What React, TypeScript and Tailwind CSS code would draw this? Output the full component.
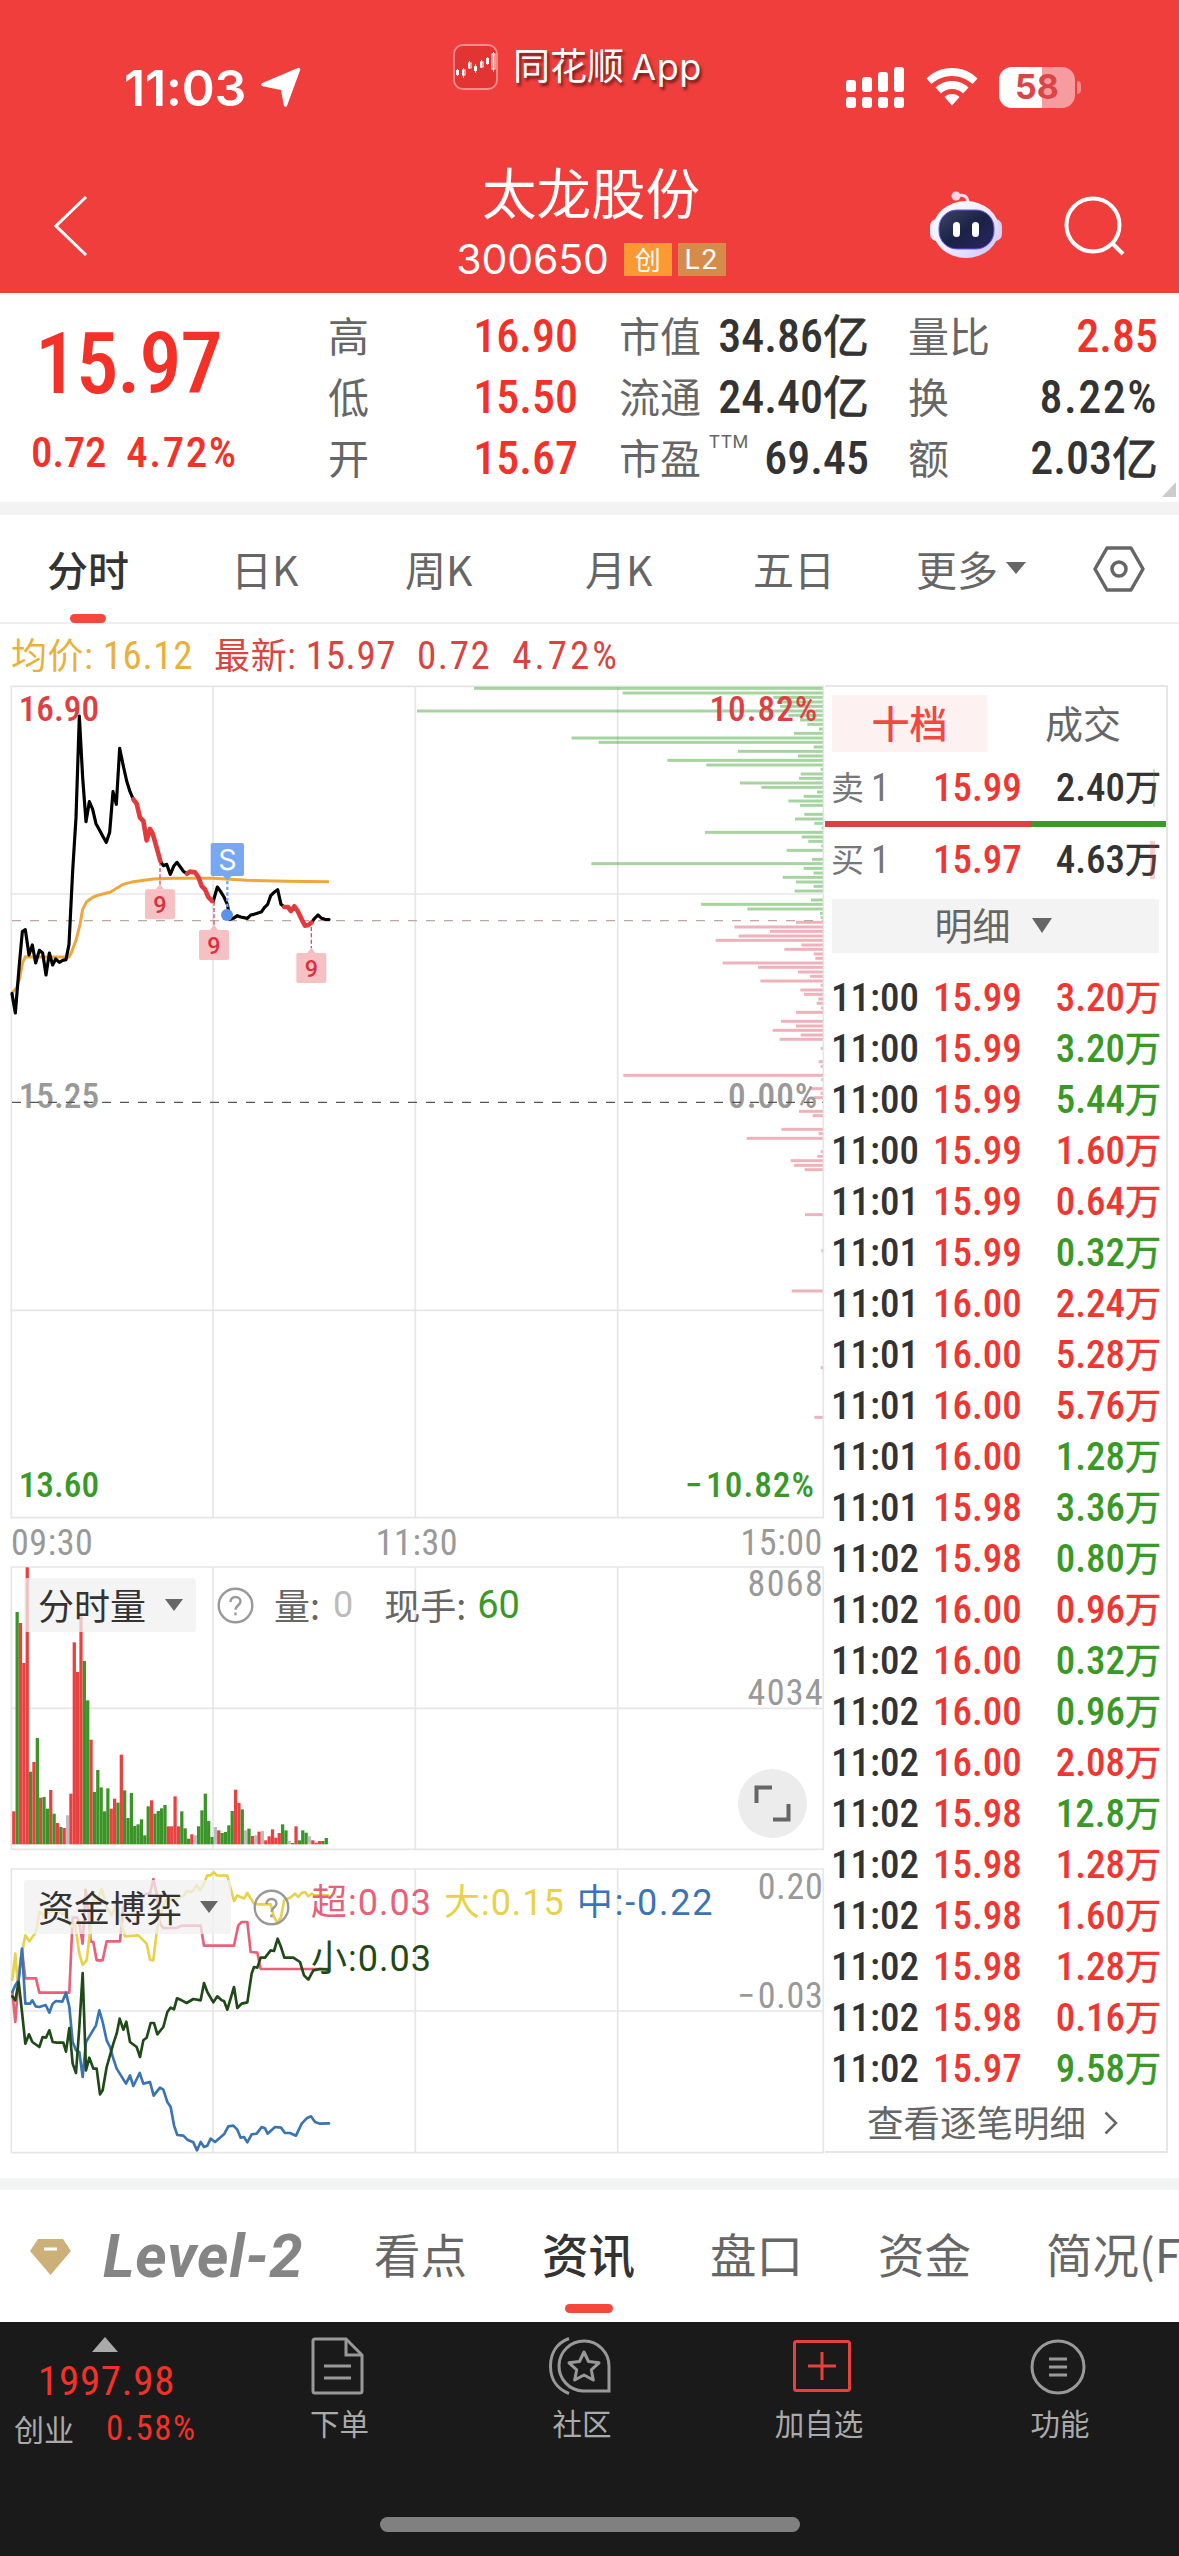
import React from 'react';
import clsx from 'clsx';

type Tone = 'red' | 'green';

const quoteColumns = [
  [
    { label: '高', value: '16.90', unit: '', hot: true },
    { label: '低', value: '15.50', unit: '', hot: true },
    { label: '开', value: '15.67', unit: '', hot: true },
  ],
  [
    { label: '市值', value: '34.86', unit: '亿', hot: false },
    { label: '流通', value: '24.40', unit: '亿', hot: false },
    { label: '市盈', value: '69.45', unit: '', hot: false, sup: 'TTM' },
  ],
  [
    { label: '量比', value: '2.85', unit: '', hot: true },
    { label: '换', value: '8.22%', unit: '', hot: false },
    { label: '额', value: '2.03', unit: '亿', hot: false },
  ],
];

const trades: [string, string, string, Tone][] = [
  ['11:00', '15.99', '3.20', 'red'],
  ['11:00', '15.99', '3.20', 'green'],
  ['11:00', '15.99', '5.44', 'green'],
  ['11:00', '15.99', '1.60', 'red'],
  ['11:01', '15.99', '0.64', 'red'],
  ['11:01', '15.99', '0.32', 'green'],
  ['11:01', '16.00', '2.24', 'red'],
  ['11:01', '16.00', '5.28', 'red'],
  ['11:01', '16.00', '5.76', 'red'],
  ['11:01', '16.00', '1.28', 'green'],
  ['11:01', '15.98', '3.36', 'green'],
  ['11:02', '15.98', '0.80', 'green'],
  ['11:02', '16.00', '0.96', 'red'],
  ['11:02', '16.00', '0.32', 'green'],
  ['11:02', '16.00', '0.96', 'green'],
  ['11:02', '16.00', '2.08', 'red'],
  ['11:02', '15.98', '12.8', 'green'],
  ['11:02', '15.98', '1.28', 'red'],
  ['11:02', '15.98', '1.60', 'red'],
  ['11:02', '15.98', '1.28', 'red'],
  ['11:02', '15.98', '0.16', 'red'],
  ['11:02', '15.97', '9.58', 'green'],
];

// Chart drawings use a grid of three units per pixel.
const GRID_X = [34, 639, 1246, 1853, 2470];

const blackSegments = [
  '36,968 46,1026 58,880 67,782 76,776 87,852 97,822 107,876 118,838 128,846 138,912 148,846 158,882 167,864 178,874 188,868 198,866 207,820 211,740 218,600 228,440 238,135 248,320 258,452 268,392 278,415 288,458 298,476 308,495 319,514 329,484 339,362 349,400 359,232 370,285 380,330 390,362 400,385',
  '481,570 490,584 500,580 511,610 521,586 531,574 541,588 551,602 561,608',
  '640,690 652,648 662,662 672,678 682,700 690,745 700,742 712,734 722,738 742,742 752,732 762,730 785,722 793,710 803,700 812,674 822,664 833,656 843,700 853,708',
  '934,755 944,742 954,732 965,742 975,745 987,746',
];

const redSegments = [
  '400,385 410,398 420,440 430,450 440,508 450,474 458,488 470,530 481,570',
  '561,608 570,602 585,604 595,618 605,645 615,655 625,678 636,690',
  '853,708 864,708 873,720 883,706 893,720 905,745 915,764 925,762 934,755',
];

const averageLine =
  '36,966 50,950 58,925 68,875 76,857 90,858 150,858 207,858 214,845 228,808 240,760 248,715 260,692 280,678 300,671 330,664 350,652 370,640 400,632 460,624 520,622 640,622 740,628 860,631 987,632';

// [y, left edge]
const sellDepth = [
  [52, 222], [66, 668], [79, 1120], [93, 1130], [106, 1140], [120, 51], [133, 1165], [147, 1200], [160, 1222], [174, 1257],
  [187, 1182], [201, 515], [214, 596], [228, 1241], [241, 1014], [255, 1194], [268, 802], [282, 919], [295, 1262], [309, 1202],
  [322, 1197], [336, 1020], [349, 1084], [363, 1251], [376, 1211], [390, 1165], [403, 1200], [430, 1213], [444, 1185], [457, 1243],
  [471, 1265], [484, 915], [498, 1205], [511, 1225], [525, 1264], [538, 1160], [565, 1236], [578, 574], [592, 1211], [606, 1241],
  [619, 1148], [633, 1188], [646, 1241], [660, 1184], [687, 1233], [700, 903], [714, 1042], [727, 1260], [740, 1262],
];

const buyDepth = [
  [754, 1188], [768, 1003], [781, 1110], [795, 1016], [808, 947], [822, 1204], [835, 1153], [849, 1241], [862, 1246], [876, 968],
  [889, 1074], [903, 1194], [916, 1230], [930, 1081], [943, 1262], [957, 1201], [970, 1212], [984, 1255], [997, 1250], [1011, 1263],
  [1024, 1188], [1051, 1143], [1065, 1188], [1078, 1118], [1092, 1202], [1105, 1139], [1132, 1262], [1172, 1256], [1186, 1262],
  [1213, 670], [1226, 1264], [1253, 1232], [1267, 1262], [1280, 1240], [1321, 1197], [1334, 1238], [1375, 1144], [1388, 1256],
  [1402, 1040], [1442, 1262], [1456, 1252], [1469, 1172], [1483, 1182], [1496, 1214], [1631, 1215], [1739, 1264], [1860, 1175],
  [2090, 1262], [2239, 1243],
];

// One bar per minute: r = up, g = down, k = flat
const volumeBars =
  'r1053,g455,r488,r608,r321,g934,r905,g833,r1012,g1010,g1045,r989,g1060,r1088,g1100,r1103,k1065,r1000,r546,r635,r468,g602,g720,r838,g995,g929,g981,g1053,g984,r1045,r1015,g1027,r883,g990,g1073,g998,g1097,g1092,g1077,g1125,g1038,r1020,g1060,g1052,g1044,g1034,r1098,r1098,r1008,r1098,g1053,g1104,g1135,r1122,k1125,g1098,g1050,g1000,g1082,g1130,k1100,r1110,g1118,g1115,g1095,g1052,r988,r1028,g1047,k1110,g1105,r1127,k1125,r1114,k1112,r1140,r1128,r1107,r1132,r1118,g1092,g1110,k1142,g1148,r1098,g1140,g1110,g1117,k1128,r1140,r1147,r1142,g1142,g1133'.split(',');

const volumeFill: Record<string, string> = { r: '#e8413f', g: '#3a9427', k: '#bdbdbd' };

const fundLines = [
  {
    color: '#e9607a',
    points:
      '37,395 46,485 56,355 66,270 76,354 108,354 118,397 208,397 218,172 232,172 238,190 248,250 257,88 267,170 272,243 280,245 290,300 308,300 320,243 360,243 370,140 380,130 440,100 450,100 460,56 470,100 480,190 490,203 530,203 545,196 602,196 612,256 702,256 715,195 725,185 742,185 752,275 772,277 782,326 985,326',
  },
  {
    color: '#e8d24a',
    points:
      '37,358 46,280 52,360 60,310 76,225 88,243 108,215 118,155 130,165 140,160 160,150 200,165 215,200 225,190 238,280 248,314 260,300 270,215 280,110 290,130 305,85 320,140 335,165 350,130 365,195 375,228 415,225 430,240 440,250 450,298 460,300 470,215 480,170 495,120 530,115 550,108 560,92 572,95 580,90 590,74 600,90 612,70 622,45 632,45 642,36 650,45 682,46 692,85 702,122 712,105 722,110 732,115 742,98 762,130 780,132 812,132 822,170 833,188 843,170 853,118 870,112 885,100 895,110 905,98 915,95 925,108 935,100 945,105 985,105',
  },
  {
    color: '#3a74b5',
    points:
      '37,395 46,375 56,360 66,265 76,430 90,430 97,420 107,438 118,440 137,434 148,457 158,430 168,422 187,424 198,397 208,440 218,545 228,570 238,575 248,650 258,545 270,525 288,495 298,450 308,485 320,540 330,560 340,595 350,625 378,670 390,645 400,677 419,638 430,670 450,665 461,706 480,682 490,688 502,725 512,740 522,795 532,824 550,826 562,838 580,846 591,870 602,845 612,860 622,856 632,835 645,845 672,822 685,798 700,796 712,808 722,832 732,830 742,846 755,822 770,820 785,800 795,804 803,820 825,800 843,802 855,818 870,818 888,826 905,790 920,774 933,768 945,785 960,790 987,789',
  },
  {
    color: '#1f4a17',
    points:
      '37,408 46,420 56,365 66,455 76,550 87,522 97,545 118,560 128,530 138,532 148,510 158,545 170,547 190,547 198,574 208,503 218,610 228,638 238,500 248,338 258,630 268,592 280,625 290,625 300,702 308,690 320,620 340,550 350,520 359,475 370,508 379,484 390,545 410,560 420,590 430,540 440,532 452,488 462,488 472,522 490,500 502,455 512,442 522,447 531,414 545,420 560,428 580,416 602,420 612,368 622,395 640,426 652,408 665,420 672,422 682,448 702,380 712,443 725,430 742,426 755,340 762,320 772,322 782,292 795,292 812,270 822,272 833,235 843,260 853,292 880,292 900,305 912,345 925,358 940,330 960,326 987,328',
  },
];

const StatusBar: React.FC = () => (
  <div className="flex h-[130px] items-start text-white">
    <div className="flex w-[453px] items-center gap-[12px] pl-[124px] pt-[63px]">
      <span className="w-[124px] font-['Inter',sans-serif] text-[50px] font-semibold leading-[50px] tracking-[-0.2px]">11:03</span>
      <svg className="h-[42px] w-[42px]" viewBox="0 0 42 42">
        <path d="M38.500 2.500 25.500 38 22.500 21.500 3 17.500z" fill="#fff" stroke="#fff" strokeWidth="3.500" strokeLinejoin="round" />
      </svg>
    </div>
    <div className="flex items-center gap-[15px] pt-[44px]">
      <svg className="h-[46px] w-[45px]" viewBox="0 0 45 46">
        <rect x="1" y="1" width="43" height="44" rx="9" fill="#e23533" stroke="#f58f8c" strokeWidth="1.800" />
        <g stroke="#fff" strokeWidth="1" fill="none">
          <path d="M4.500 25v7M10.500 24v10M16.500 17v8M22.500 20v9M28.500 16v8M34.500 13v8M40.500 8v20" />
          <rect x="9.500" y="26" width="2.500" height="5" />
          <rect x="15.500" y="19" width="2.500" height="5" />
          <rect x="27.500" y="18" width="2.500" height="5" />
          <rect x="39" y="10" width="3" height="15" />
        </g>
        <path d="M3 26h3v5H3zM21 22h3v5h-3zM33 14h3v6h-3z" fill="#fff" />
      </svg>
      <span className="-mt-[3px] text-[37px] leading-[46px] [text-shadow:2px_3px_3px_rgba(0,0,0,0.55)]">
        同花顺 <span className="-ml-[1px] font-['Inter',sans-serif] text-[36px] tracking-[0.5px]">App</span>
      </span>
    </div>
    <div className="ml-auto flex items-center gap-[21px] pr-[98px] pt-[66px]">
      <svg className="h-[42px] w-[59px]" viewBox="0 0 59 42" fill="#fff">
        <rect x="0" y="14" width="10" height="12" rx="3" />
        <rect x="16" y="11" width="10" height="15" rx="3" />
        <rect x="32" y="6" width="10" height="20" rx="3" />
        <rect x="48" y="1" width="10" height="25" rx="3" />
        <rect x="0" y="31" width="10" height="11" rx="3" />
        <rect x="16" y="31" width="10" height="11" rx="3" />
        <rect x="32" y="31" width="10" height="11" rx="3" />
        <rect x="48" y="31" width="10" height="11" rx="3" />
      </svg>
      <svg className="h-[38px] w-[52px]" viewBox="0 0 52 38" fill="#fff">
        <path d="M26 0c10 0 19 4 25.500 10.500l-5 5.500C41 11 34 8 26 8S11 11 5.500 16l-5-5.500C7 4 16 0 26 0z" />
        <path d="M26 13c6.500 0 12 2.500 16.500 6.500l-5.500 6C34 22.500 30.500 21 26 21s-8 1.500-11 4.500l-5.500-6C14 15.500 19.500 13 26 13z" />
        <path d="M26 26c3 0 5.500 1 7.500 3L26 37.500 18.500 29c2-2 4.500-3 7.500-3z" />
      </svg>
      <div className="flex items-center gap-[2px]">
        <div className="flex h-[41px] w-[76px] items-center justify-center rounded-[13px] bg-[linear-gradient(90deg,#fff_56%,#f69c9f_56%)]">
          <span className="font-['Inter',sans-serif] text-[34px] font-bold leading-none text-[#dc4446]">58</span>
        </div>
        <div className="h-[13px] w-[4px] rounded-r-full bg-[#f48a8a]" />
      </div>
    </div>
  </div>
);

const Header: React.FC = () => (
  <header className="h-[293px] bg-[#ef3e3c]">
    <StatusBar />
    <div className="flex h-[163px] pl-[54px] text-white">
      <svg className="mt-[66px] h-[60px] w-[34px]" viewBox="0 0 34 60" fill="none" stroke="#fff" strokeWidth="3">
        <path d="M32 1 2 30l30 29" />
      </svg>
      <div className="ml-[334px] flex w-[338px] flex-col items-center pt-[34px]">
        <h1 className="text-[54.500px] leading-[54px]">太龙股份</h1>
        <div className="mt-[21px] flex items-center">
          <span className="font-['Inter',sans-serif] text-[41px] leading-[41px] tracking-[-0.1px]">300650</span>
          <span className="ml-[15px] flex h-[33px] w-[48px] items-center justify-center bg-[#fb9932] pb-[2px] text-[26px] leading-none">创</span>
          <span className="ml-[6px] flex h-[33px] w-[48px] items-center justify-center bg-[#d58c4b] font-['Roboto',sans-serif] text-[28px] leading-none tracking-[2px]">L2</span>
        </div>
      </div>
      <div className="ml-[170px] flex gap-[60px] pt-[60px]">
        <svg className="h-[68px] w-[74px]" viewBox="0 0 74 68">
          <defs>
            <linearGradient id="shell" x1="0" y1="0" x2="1" y2="1">
              <stop offset="0" stopColor="#ffffff" />
              <stop offset="0.600" stopColor="#ebe6ff" />
              <stop offset="1" stopColor="#c9c0fb" />
            </linearGradient>
            <linearGradient id="visor" x1="0" y1="0" x2="1" y2="1">
              <stop offset="0" stopColor="#3d4468" />
              <stop offset="0.500" stopColor="#1a2245" />
              <stop offset="1" stopColor="#2b2566" />
            </linearGradient>
          </defs>
          <path d="M27 6c6-2 11 0 11 7" fill="none" stroke="#f6dcea" strokeWidth="3" />
          <circle cx="26" cy="6" r="4.500" fill="#f9d5e4" />
          <rect x="0" y="29" width="14" height="22" rx="7" fill="#f0ecff" />
          <rect x="58" y="29" width="14" height="22" rx="7" fill="#d8d0fb" />
          <ellipse cx="36" cy="39.500" rx="33" ry="28.500" fill="url(#shell)" />
          <rect x="9" y="20" width="55" height="39" rx="18" fill="url(#visor)" stroke="#6a58e0" strokeWidth="1" />
          <rect x="23" y="32" width="7" height="15" rx="3.500" fill="#fff" />
          <rect x="42" y="32" width="7" height="15" rx="3.500" fill="#fff" />
        </svg>
        <svg className="mt-[5px] h-[62px] w-[62px]" viewBox="0 0 62 62" fill="none" stroke="#fff" strokeWidth="4">
          <circle cx="29" cy="30" r="26.500" />
          <path d="M48 48l11 11" />
        </svg>
      </div>
    </div>
  </header>
);

const QuotePanel: React.FC = () => (
  <section className="flex h-[209px] pt-[12px]">
    <div className="w-[328px] shrink-0 text-[#f33128]">
      <div className="pl-[35px] pt-[17px] font-['Roboto_Condensed',sans-serif] text-[85px] font-medium leading-[85px] tracking-[-1.5px]">15.97</div>
      <div className="flex gap-[20px] pl-[31px] pt-[20px] font-['Roboto_Condensed',sans-serif] text-[43px] font-medium leading-[50px]">
        <span className="tracking-[-0.3px]">0.72</span>
        <span className="tracking-[1.5px]">4.72%</span>
      </div>
    </div>
    <div className="flex shrink-0 gap-[41px]">
      {quoteColumns.map((rows, idx) => (
        <div key={idx} className={clsx('flex w-[250px] flex-col', idx === 2 && '-ml-[2px]')}>
          {rows.map((row) => (
            <div key={row.label} className="flex h-[61px] items-center justify-between">
              <span className="-mt-[3px] flex text-[41px] leading-none text-[#666]">
                {row.label}
                {'sup' in row && <span className="-mt-[3px] ml-[8px] font-['Roboto',sans-serif] text-[18px] tracking-[1px]">{row.sup}</span>}
              </span>
              <span
                className={clsx(
                  "flex items-center font-['Roboto_Condensed',sans-serif] text-[46px] font-medium leading-none",
                  row.hot ? 'text-[#f33128]' : 'text-[#333]',
                  row.value.endsWith('%') && 'tracking-[1.5px]',
                )}
              >
                {row.value}
                {row.unit && <span className="-mt-[6px] font-['Noto_Sans_CJK_SC',sans-serif] text-[46px] font-normal leading-none [-webkit-text-stroke:0.8px]">{row.unit}</span>}
              </span>
            </div>
          ))}
        </div>
      ))}
    </div>
    <div className="mb-[5px] ml-[4px] mt-auto h-0 w-0 border-b-[15px] border-l-[14px] border-b-[#ccc] border-l-transparent" />
  </section>
);

const PeriodTabs: React.FC = () => (
  <nav className="flex h-[109px] items-start border-b-2 border-[#eee] pl-[47px] text-[41px] leading-[106px] text-[#666]">
    <div className="flex w-[184px] flex-col font-medium text-[#333]">
      <span>分时</span>
      <span className="-mt-[7px] ml-[23px] h-[9px] w-[36px] rounded-full bg-[#f5483b]" />
    </div>
    <span className="w-[174px]">日K</span>
    <span className="w-[180px]">周K</span>
    <span className="w-[168px]">月K</span>
    <span className="w-[163px]">五日</span>
    <div className="flex w-[177px] items-center gap-[8px]">
      更多
      <span className="h-0 w-0 border-x-[10px] border-t-[12px] border-x-transparent border-t-[#666]" />
    </div>
    <svg className="mt-[31px] h-[46px] w-[52px]" viewBox="0 0 52 46" fill="none" stroke="#666" strokeWidth="3.500">
      <path d="M14 2h24l12 21-12 21H14L2 23z" strokeLinejoin="round" />
      <circle cx="26" cy="23" r="7" />
    </svg>
  </nav>
);

const NineMark: React.FC<{ x: number; from: number; top: number }> = ({ x, from, top }) => (
  <g>
    <path d={`M${x} ${from}V${top - 14}`} stroke="#d84a5c" strokeWidth="4" strokeDasharray="12 7" />
    <path d={`M${x - 12} ${top}l12-16 12 16z`} fill="#f5bcbd" />
    <rect x={x - 45} y={top} width="90" height="90" rx="6" fill="#f5bcbd" fillOpacity="0.920" />
    <text x={x} y={top + 72} textAnchor="middle" className="fill-[#dc2f3c] font-['Roboto',sans-serif] text-[70px] font-medium">9</text>
  </g>
);

const PriceChart: React.FC = () => (
  <svg className="block h-[835px] w-[825px]" viewBox="0 42 2475 2505" fill="none">
    <g stroke="#e6e6e6" strokeWidth="5">
      {GRID_X.map((x) => (
        <path key={x} d={`M${x} 46V2540`} />
      ))}
      <path d="M32 46H2472M32 669H2472M32 1918H2472M32 2540H2472" />
    </g>
    <g fill="#3aa02c" fillOpacity="0.450">
      {sellDepth.map(([y, x]) => (
        <rect key={y} x={1200 + x} y={y - 4.5} width={1268 - x} height="9" />
      ))}
    </g>
    <g fill="#d9475a" fillOpacity="0.420">
      {buyDepth.map(([y, x]) => (
        <rect key={y} x={1200 + x} y={y - 4.5} width={1268 - x} height="9" />
      ))}
    </g>
    <path d="M36 749H2468" stroke="#bda99f" strokeWidth="4" strokeDasharray="27 27" />
    <g className="font-['Roboto_Condensed',sans-serif] text-[106px] font-medium">
      <text x="56" y="150" className="fill-[#dc4043]">16.90</text>
      <text x="2455" y="150" textAnchor="end" className="fill-[#dc4043] tracking-[3px]">10.82%</text>
      <text x="56" y="1312" className="fill-[#999]">15.25</text>
      <text x="2455" y="1312" textAnchor="end" className="fill-[#999] tracking-[3px]">0.00%</text>
      <text x="56" y="2477" className="fill-[#389927]">13.60</text>
      <text x="2455" y="2477" textAnchor="end" className="fill-[#389927] tracking-[3px]">
        <tspan dx="-10">−</tspan>
        <tspan dx="8">10.82%</tspan>
      </text>
    </g>
    <path d="M36 1294H2468" stroke="#555" strokeWidth="4" strokeDasharray="27 27" />
    <polyline points={averageLine} stroke="#efa63c" strokeWidth="9" strokeLinejoin="round" />
    <NineMark x={480} from={572} top={655} />
    <NineMark x={642} from={692} top={777} />
    <NineMark x={934} from={768} top={846} />
    {blackSegments.map((points) => (
      <polyline key={points} points={points} stroke="#000" strokeWidth="9.500" strokeLinejoin="round" strokeLinecap="round" />
    ))}
    {redSegments.map((points) => (
      <polyline key={points} points={points} stroke="#e33a3d" strokeWidth="14" strokeLinejoin="round" strokeLinecap="round" />
    ))}
    <path d="M682 630V715" stroke="#7ba6ee" strokeWidth="7" strokeDasharray="10 7" />
    <circle cx="681" cy="732" r="18" fill="#5a93ec" />
    <path d="M668 614h28l-14 14z" fill="#78a8f3" />
    <rect x="632" y="516" width="100" height="99" rx="6" fill="#78a8f3" />
    <text x="682" y="597" textAnchor="middle" className="fill-white font-['Inter',sans-serif] text-[86px]">S</text>
  </svg>
);

const Help: React.FC = () => (
  <svg className="h-[37px] w-[37px] shrink-0" viewBox="0 0 37 37" fill="none" stroke="#999" strokeWidth="2.400">
    <circle cx="18.500" cy="18.500" r="16.800" />
    <path d="M13.500 15c0-3 2-5 5-5s5 2 5 4.600c0 3.400-5 4-5 8.200" />
    <path d="M18.500 25.500v2.800" />
  </svg>
);

const Selector: React.FC<{ label: string; className: string }> = ({ label, className }) => (
  <div className={clsx('flex h-[54px] items-center justify-between rounded-[3px] bg-[#f0f0f0]/75 pl-[14px] pr-[13px] text-[36px] leading-none text-[#333]', className)}>
    <span className="-mt-[2px]">{label}</span>
    <span className="h-0 w-0 border-x-[9px] border-t-[12px] border-x-transparent border-t-[#666]" />
  </div>
);

const VolumeChart: React.FC = () => (
  <div className="relative">
    <svg className="block h-[285px] w-[825px] overflow-visible" viewBox="0 317 2475 855" fill="none">
      <g stroke="#e6e6e6" strokeWidth="5">
        {GRID_X.map((x) => (
          <path key={x} d={`M${x} 320V1167`} />
        ))}
        <path d="M32 320H2472M32 744H2472M32 1167H2472" />
      </g>
      {volumeBars.map((bar, idx) => {
        const top = Number(bar.slice(1));
        return <rect key={idx} x={36.5 + idx * 10.08} y={top} width="9.800" height={1152 - top} fill={volumeFill[bar[0]]} />;
      })}
      <g className="fill-[#999] font-['Roboto_Condensed',sans-serif] text-[108px] tracking-[4px]">
        <text x="2472" y="407" textAnchor="end">8068</text>
        <text x="2472" y="735" textAnchor="end">4034</text>
      </g>
    </svg>
    <div className="absolute left-[24px] top-[12px] flex items-center text-[36px] leading-none text-[#666]">
      <Selector label="分时量" className="w-[172px]" />
      <div className="ml-[21px]">
        <Help />
      </div>
      <span className="-mt-[2px] ml-[20px]">量:</span>
      <span className="ml-[13px] font-['Roboto',sans-serif] text-[#bbb]">0</span>
      <span className="-mt-[2px] ml-[31px]">现手:</span>
      <span className="ml-[11px] font-['Roboto',sans-serif] text-[38px] text-[#389927]">60</span>
    </div>
    <div className="absolute left-[738px] top-[203px] flex h-[69px] w-[69px] items-center justify-center rounded-full bg-[#ececec]">
      <svg className="h-[37px] w-[37px]" viewBox="0 0 37 37" fill="none" stroke="#666" strokeWidth="4">
        <path d="M2.500 18V2.500H18M34.500 19v15.500H19" />
      </svg>
    </div>
  </div>
);

const FundChart: React.FC = () => (
  <div className="relative">
    <svg className="block h-[286px] w-[825px] overflow-visible" viewBox="0 23 2475 858" fill="none">
      <g stroke="#e6e6e6" strokeWidth="5">
        {GRID_X.map((x) => (
          <path key={x} d={`M${x} 26V877`} />
        ))}
        <path d="M32 26H2472M32 452H2472M32 877H2472" />
      </g>
      {fundLines.map((line) => (
        <polyline key={line.color} points={line.points} stroke={line.color} strokeWidth="8" strokeLinejoin="round" strokeLinecap="round" />
      ))}
      <g className="fill-[#999] font-['Roboto_Condensed',sans-serif] text-[108px] tracking-[2px]">
        <text x="2470" y="116" textAnchor="end">0.20</text>
        <text x="2470" y="443" textAnchor="end">
          −<tspan dx="6">0.03</tspan>
        </text>
      </g>
    </svg>
    <div className="absolute left-[24px] top-[12px] flex items-center">
      <Selector label="资金博弈" className="w-[207px]" />
      <div className="ml-[22px]">
        <Help />
      </div>
    </div>
    <div className="absolute left-[311px] top-[7px] flex w-[480px] flex-wrap gap-x-[12px] font-['Roboto','Noto_Sans_CJK_SC',sans-serif] text-[36px] leading-[56px] tracking-[1px]">
      <span className="text-[#e9607a]">超:0.03</span>
      <span className="text-[#e8d24a]">大:0.15</span>
      <span className="tracking-[1.8px] text-[#3a74b5]">中:-0.22</span>
      <span className="text-[#1f4a17]">小:0.03</span>
    </div>
  </div>
);

const Amount: React.FC<{ value: string; className: string }> = ({ value, className }) => (
  <span className={clsx("flex items-center font-['Roboto_Condensed',sans-serif] text-[39px] font-medium leading-none", className)}>
    {value}
    <span className="-mt-[7px] font-['Noto_Sans_CJK_SC',sans-serif] text-[36px] font-normal leading-none [-webkit-text-stroke:0.7px]">万</span>
  </span>
);

const BookRow: React.FC<{ side: string; price: string; amount: string; barClass: string }> = ({ side, price, amount, barClass }) => (
  <div className="relative grid h-[66px] grid-cols-[102px_1fr_auto] items-center pl-[6px] pr-[5px] text-[39px] leading-none">
    <span className="flex items-center text-[33px] text-[#777]">
      <span className="-mt-[3px]">{side}</span>
      <span className="ml-[7px] font-['Roboto_Condensed',sans-serif] text-[38px]">1</span>
    </span>
    <span className="font-['Roboto_Condensed',sans-serif] font-medium text-[#ef3631]">{price}</span>
    <Amount value={amount} className="text-[#333]" />
    <span className={clsx('absolute right-[11px] top-[14px] h-[38px]', barClass)} />
  </div>
);

const OrderBook: React.FC = () => (
  <aside className="flex h-[1468px] w-[343px] flex-col border-b-2 border-r-2 border-t-2 border-[#e6e6e6] pt-[8px]">
    <div className="mx-[7px] flex h-[57px] text-[38px] leading-[54px]">
      <span className="w-[155px] bg-[#fdf1f1] text-center font-medium text-[#ee4a40]">十档</span>
      <span className="flex-1 pl-[58px] text-[#666]">成交</span>
    </div>
    <div className="pt-[3px]">
      <BookRow side="卖" price="15.99" amount="2.40" barClass="w-[2px] bg-[#389927]/25" />
    </div>
    <div className="flex h-[6px]">
      <div className="w-[207px] bg-[#dd4041]" />
      <div className="flex-1 bg-[#3a9927]" />
    </div>
    <BookRow side="买" price="15.97" amount="4.63" barClass="w-[5px] bg-[#e33a3d]/25" />
    <div className="mx-[7px] mt-[6px] flex h-[54px] items-center justify-center gap-[21px] bg-[#f3f3f3] pr-[5px] text-[38px] leading-none text-[#666]">
      <span className="-mt-[4px]">明细</span>
      <span className="-mt-[2px] h-0 w-0 border-x-[10px] border-t-[15px] border-x-transparent border-t-[#666]" />
    </div>
    <ul className="mt-[20px]">
      {trades.map(([time, price, amount, tone], idx) => (
        <li key={idx} className="grid h-[51px] grid-cols-[102px_1fr_auto] items-center pl-[6px] pr-[5px] font-['Roboto_Condensed',sans-serif] text-[39px] font-medium leading-none">
          <span className="text-[#333]">{time}</span>
          <span className="text-[#ef3631]">{price}</span>
          <Amount value={amount} className={tone === 'red' ? 'text-[#ef3631]' : 'text-[#389927]'} />
        </li>
      ))}
    </ul>
    <div className="mt-[4px] flex h-[48px] items-center gap-[18px] pl-[42px] text-[36.500px] leading-none text-[#666]">
      <span className="-mt-[1px]">查看逐笔明细</span>
      <svg className="h-[24px] w-[14px]" viewBox="0 0 14 24" fill="none" stroke="#666" strokeWidth="2.500">
        <path d="M1.500 1.500 12 12 1.500 22.500" />
      </svg>
    </div>
  </aside>
);

const SectionTabs: React.FC = () => (
  <nav className="flex h-[132px] items-start overflow-hidden whitespace-nowrap bg-white pl-[30px] text-[46.500px] leading-[126px] text-[#666]">
    <svg className="mt-[48px] h-[38px] w-[41px] shrink-0" viewBox="0 0 41 38">
      <path d="M8 1h25l8 12-20.500 24L0 13z" fill="#cdb077" />
      <path d="M14 9.500h13v3H14z" fill="#fff" />
    </svg>
    <span className="ml-[32px] w-[271px] shrink-0 font-['Roboto',sans-serif] text-[60px] font-bold italic leading-[133px] tracking-[0.8px] text-[#858585]">Level-2</span>
    <span className="w-[168px] shrink-0">看点</span>
    <div className="flex w-[168px] shrink-0 flex-col font-medium text-[#333]">
      <span>资讯</span>
      <span className="-mt-[12px] ml-[23px] h-[9px] w-[48px] rounded-full bg-[#f5483b]" />
    </div>
    <span className="w-[168px] shrink-0">盘口</span>
    <span className="w-[168px] shrink-0">资金</span>
    <span className="shrink-0">简况(F10)</span>
  </nav>
);

const BottomBar: React.FC = () => (
  <footer className="flex h-[234px] flex-col bg-[#1a1a1a] text-[#aaa]">
    <div className="flex h-[195px]">
      <div className="w-[217px] pl-[14px] pt-[15px] font-['Roboto_Condensed',sans-serif] text-[#f33128]">
        <div className="ml-[78px] h-0 w-0 border-x-[13px] border-b-[15px] border-x-transparent border-b-[#aaa]" />
        <div className="pl-[24px] pt-[8px] text-[41px] leading-[43px] tracking-[0.7px]">1997.98</div>
        <div className="flex items-center pt-[6px]">
          <span className="-mt-[3px] font-['Noto_Sans_CJK_SC',sans-serif] text-[30px] leading-[40px] text-[#aaa]">创业</span>
          <span className="pl-[32px] text-[35px] leading-[40px] tracking-[1.5px]">0.58%</span>
        </div>
      </div>
      <div className="flex w-[245px] flex-col items-center pt-[15px]">
        <svg className="-ml-[4px] h-[58px] w-[53px]" viewBox="0 0 53 58" fill="none" stroke="#999" strokeWidth="3">
          <path d="M4 2h31l16 16v36a2 2 0 0 1-2 2H4a2 2 0 0 1-2-2V4a2 2 0 0 1 2-2z" />
          <path d="M35 2v16h16M13 29h27M13 41h27" />
        </svg>
        <span className="mt-[6px] text-[29.500px] leading-[42px]">下单</span>
      </div>
      <div className="flex w-[240px] flex-col items-center pt-[15px]">
        <svg className="-ml-[4px] h-[58px] w-[62px]" viewBox="0 0 62 58" fill="none" stroke="#999" strokeWidth="3">
          <path d="M20 1.500C8 6 1.500 16 1.500 29S8 52 20 56.500" />
          <path d="M60 54H34A25 25 0 1 1 60 29z" />
          <path d="M35 15l4.500 9.500 10.500 1.300-7.700 7 2 10.200L35 38l-9.300 5 2-10.200-7.700-7L30.500 24.500z" strokeLinejoin="round" />
        </svg>
        <span className="mt-[6px] text-[29.500px] leading-[42px]">社区</span>
      </div>
      <div className="flex w-[236px] flex-col items-center pt-[18px]">
        <svg className="ml-[4px] h-[52px] w-[58px]" viewBox="0 0 58 52" fill="none" stroke="#e8403c" strokeWidth="3">
          <rect x="1.500" y="1.500" width="55" height="49" rx="2" />
          <path d="M29 12v28M15 26h28" />
        </svg>
        <span className="-ml-[2px] mt-[9px] text-[29.500px] leading-[42px]">加自选</span>
      </div>
      <div className="flex flex-1 flex-col items-center pl-[3px] pt-[17px]">
        <svg className="-ml-[4px] h-[56px] w-[56px]" viewBox="0 0 56 56" fill="none" stroke="#999" strokeWidth="3">
          <circle cx="28" cy="28" r="26" />
          <path d="M19 20h18M19 28h18M19 36h18" />
        </svg>
        <span className="mt-[6px] text-[29.500px] leading-[42px]">功能</span>
      </div>
    </div>
    <div className="mx-auto h-[15px] w-[420px] rounded-full bg-[#808080]" />
  </footer>
);

const App: React.FC = () => {
  return (
    <div className="flex h-[2556px] w-[1179px] flex-col overflow-hidden bg-white font-['Noto_Sans_CJK_SC',sans-serif]">
      <Header />
      <QuotePanel />
      <div className="h-[13px] bg-[#f3f3f3]" />
      <PeriodTabs />
      <div className="flex h-[61px] items-center gap-[21px] pl-[11px] pt-[3px] font-['Roboto_Condensed','Noto_Sans_CJK_SC',sans-serif] text-[39px] leading-none tracking-[0.6px] text-[#d9443f]">
        <span className="text-[#eab03c]">
          <span className="text-[36px]">均价:</span> 16.12
        </span>
        <span>
          <span className="text-[36px]">最新:</span> 15.97
        </span>
        <span className="tracking-[1.5px]">0.72</span>
        <span className="tracking-[3px]">4.72%</span>
      </div>
      <main className="flex h-[1493px]">
        <div className="w-[825px]">
          <PriceChart />
          <div className="flex h-[46px] items-center justify-between pl-[11px] pr-[2px] font-['Roboto_Condensed',sans-serif] text-[36px] leading-none tracking-[0.6px] text-[#999]">
            <span>09:30</span>
            <span>11:30</span>
            <span>15:00</span>
          </div>
          <VolumeChart />
          <div className="h-[17px]" />
          <FundChart />
        </div>
        <OrderBook />
      </main>
      <div className="h-[12px] bg-[#f3f4f4]" />
      <SectionTabs />
      <BottomBar />
    </div>
  );
};

export default App;
